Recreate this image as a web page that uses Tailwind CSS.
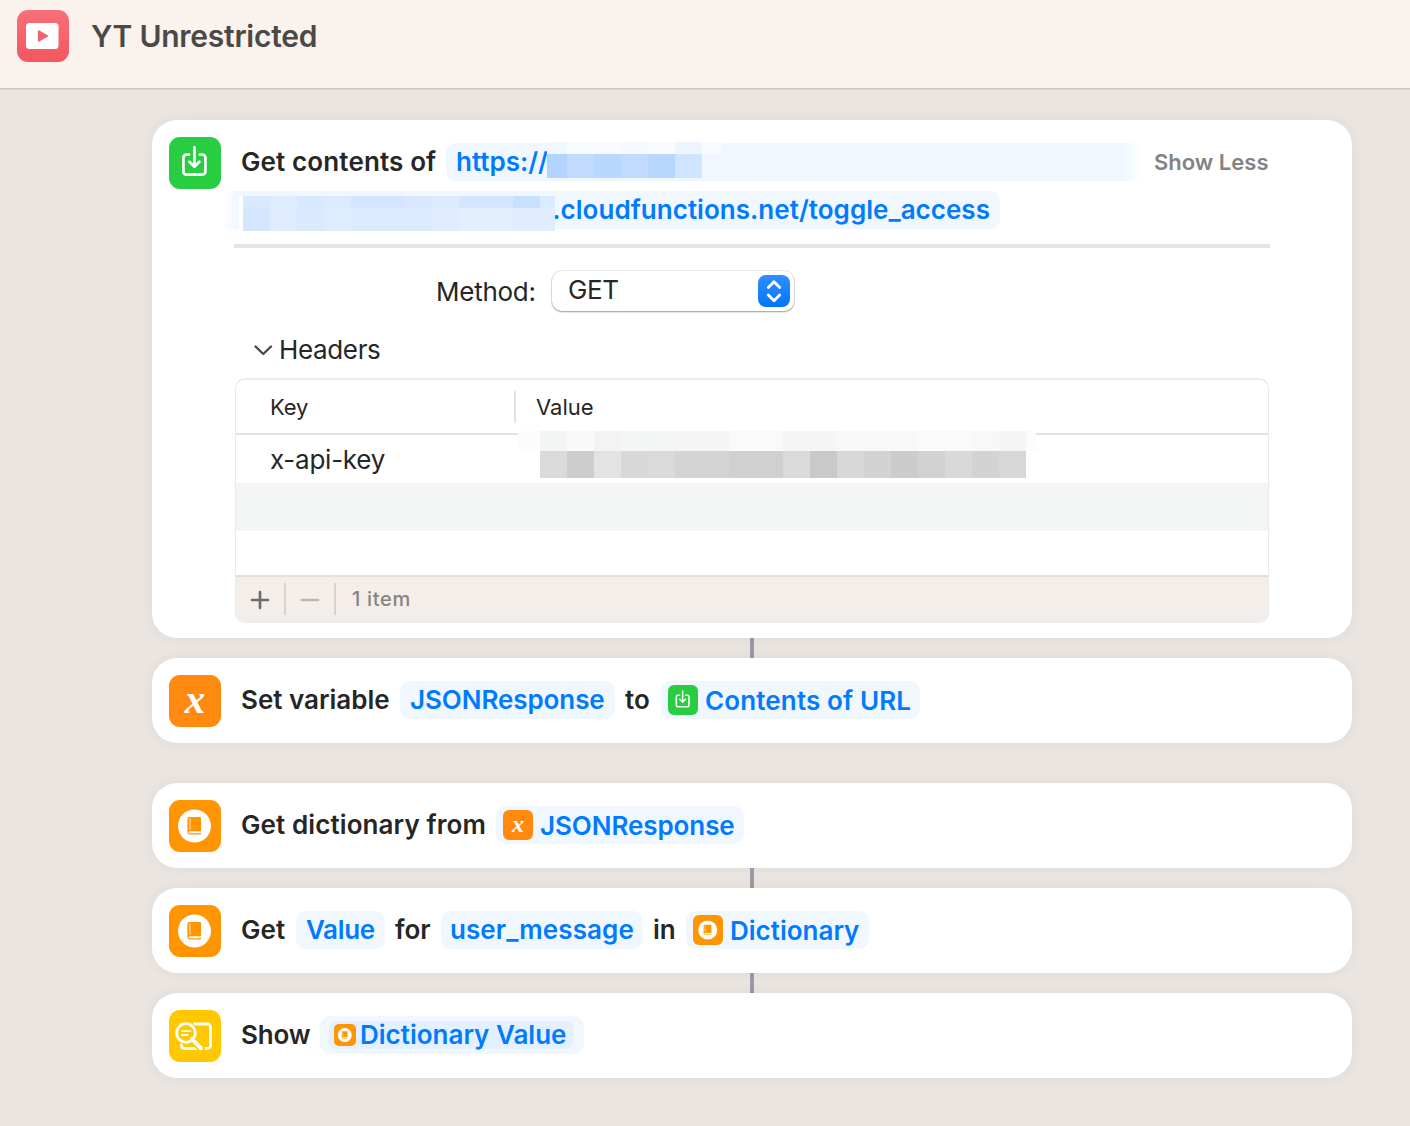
<!DOCTYPE html>
<html lang="en">
<head>
<meta charset="utf-8">
<title>YT Unrestricted</title>
<script src="https://cdn.jsdelivr.net/npm/@tailwindcss/browser@4"></script>
</head>
<body class="w-[1410px] h-[1126px] overflow-hidden bg-[#eae5e1] font-['Inter',sans-serif] text-[26px] leading-[38px] text-[#262626]">
<svg class="hidden">
  <symbol id="download" viewBox="0 0 52 52"><g fill="none" stroke="#fff" stroke-width="2.7" stroke-linecap="round" stroke-linejoin="round"><path d="M20 17.6h-2.600a3 3 0 0 0-3 3v14a3 3 0 0 0 3 3h16a3 3 0 0 0 3-3v-14a3 3 0 0 0-3-3h-2.600"/><path d="M25.400 10.300v19.400M20.400 24.800l5 5 5-5"/></g></symbol>
  <symbol id="book" viewBox="0 0 52 52"><circle cx="25.500" cy="26" r="16.500" fill="#fff"/><path d="M20.500 17h10.200a1.300 1.300 0 0 1 1.300 1.300v12.400l-.8.8v1.400l.8.2v.6a.7.7 0 0 1-.7.700H20.800a2.400 2.400 0 0 1-2.400-2.400V19a2 2 0 0 1 2.100-2z" fill="#ff9500"/><path d="M21 18.200v11.800" stroke="#ffd9a3" stroke-width="1.300"/><path d="M20.600 31.200h10.200v2H20.600a1 1 0 0 1 0-2z" fill="#fff"/></symbol>
  <symbol id="quicklook" viewBox="0 0 52 52"><g fill="none" stroke="#fff" stroke-width="2.800" stroke-linecap="round" stroke-linejoin="round"><path d="M25 14h13.500a3 3 0 0 1 3 3v18.500a3 3 0 0 1-3 3H37M12.400 34.500v1a3 3 0 0 0 3 3H27"/><path d="M24.500 30.200l6.500 7.500" stroke="#ffc800" stroke-width="7"/><path d="M23.400 29.400l8.400 8.800" stroke-width="4"/><circle cx="17" cy="23" r="11.800" fill="#ffc800" stroke="none"/><path d="M23 29l3 3.200" stroke-width="3.600"/><circle cx="17" cy="23" r="9.300"/><path d="M13 21.100h8.500M13 25h5.500" stroke-width="1.900"/></g></symbol>
</svg>

<header class="flex h-[89px] items-start gap-[22px] border-b border-[#c9c3bf] bg-[#faf2ed] pl-[17px] pt-[10px] shadow-[0_1px_0_#ddd7d3]">
  <div class="flex size-[52px] items-center justify-center rounded-[11px] bg-linear-to-b from-[#f96f78] to-[#f4565f]">
    <svg class="size-[52px]" viewBox="0 0 52 52"><rect x="9" y="13" width="32.500" height="26" rx="3.500" fill="#fff"/><path d="M21.500 20.800v10.400l9.200-5.200z" fill="#f5616b" stroke="#f5616b" stroke-width="1.200" stroke-linejoin="round"/></svg>
  </div>
  <h1 class="mt-[7px] whitespace-nowrap text-[30px] font-semibold tracking-[-0.25px] text-[#4b4947]">YT Unrestricted</h1>
</header>

<main class="ml-[152px] mt-[31px] flex w-[1200px] flex-col">
  <section class="relative h-[518px] rounded-[25px] bg-white px-[17px] pt-[17px] shadow-[0_0_14px_rgba(0,0,0,0.05)]">
    <div class="flex h-[54px]">
      <div class="size-[52px] shrink-0 rounded-[11px] bg-[#28cd41]"><svg class="size-[52px]"><use href="#download"/></svg></div>
      <div class="ml-[20px] mt-[6px] flex h-[38px] whitespace-nowrap font-semibold">
        <div class="w-[205px] tracking-[0.13px]">Get contents of</div>
        <div class="w-[696px] rounded-l-[10px] bg-linear-to-r from-[#f0f7ff] from-97% to-white pl-[10px] text-[#007aff]">https://</div>
        <div class="ml-[12px] text-[22px] text-[#838383]">Show Less</div>
      </div>
    </div>
    <div class="ml-[53px] flex h-[38px] w-[778px] justify-end rounded-r-[10px] bg-linear-to-r from-white to-[#f0f7ff] to-2% pr-[10px] font-semibold tracking-[0.03px] text-[#007aff]">.cloudfunctions.net/toggle_access</div>

    <!-- redacted parts of the address -->
    <div class="absolute left-[395px] top-[22px] flex h-3">
      <i class="w-5 bg-[#f0f7ff]"></i><i class="w-[54px] bg-[#f9fcff]"></i><i class="w-[27px] bg-[#f5faff]"></i><i class="w-[27px] bg-[#f9fcff]"></i><i class="w-[27px] bg-[#edf5ff]"></i><i class="w-5 bg-[#f9fcff]"></i>
    </div>
    <div class="absolute left-[395px] top-[34px] flex h-6">
      <i class="w-5 bg-[#b3d4ff]"></i><i class="w-[27px] bg-[#c2dbff]"></i><i class="w-[27px] bg-[#b9d8ff]"></i><i class="w-[27px] bg-[#c0dbff]"></i><i class="w-[27px] bg-[#b7d7ff]"></i><i class="w-[27px] bg-[#cfe4ff]"></i>
    </div>
    <div class="absolute left-[87px] top-[76px] h-[35px] w-1 bg-white"></div>
    <div class="absolute left-[91px] top-[76px] flex h-3">
      <i class="w-[27px] bg-[#d9e9ff]"></i><i class="w-[27px] bg-[#dfebff]"></i><i class="w-[27px] bg-[#d8e8ff]"></i><i class="w-[27px] bg-[#dceaff]"></i><i class="w-[54px] bg-[#d4e6ff]"></i><i class="w-[27px] bg-[#d9e8ff]"></i><i class="w-[27px] bg-[#dceaff]"></i><i class="w-[54px] bg-[#d5e7ff]"></i><i class="w-[27px] bg-[#c9dfff]"></i><i class="w-[15px] bg-[#dceaff]"></i>
    </div>
    <div class="absolute left-[91px] top-[88px] flex h-[23px]">
      <i class="w-[27px] bg-[#d3e6ff]"></i><i class="w-[27px] bg-[#dfebff]"></i><i class="w-[27px] bg-[#d9eaff]"></i><i class="w-[27px] bg-[#deecff]"></i><i class="w-[81px] bg-[#daeaff]"></i><i class="w-[27px] bg-[#dfebff]"></i><i class="w-[54px] bg-[#e2efff]"></i><i class="w-[42px] bg-[#e0edff]"></i>
    </div>

    <div class="ml-[65px] mt-[15px] h-1 w-[1036px] bg-[#e5e5e5]"></div>

    <div class="ml-[267px] mt-[23px] flex h-[40px] items-center">
      <div class="w-[116px] whitespace-nowrap pt-[2px] tracking-[-0.25px]">Method:</div>
      <div class="flex h-[40px] w-[242px] items-center justify-between rounded-[10px] bg-white pl-4 pr-1 shadow-[0_0_0_1px_rgba(0,0,0,0.07),0_1px_2px_rgba(0,0,0,0.35)]">
        <span class="-mt-[2px] tracking-[-0.4px]">GET</span>
        <div class="size-8 rounded-[8px] bg-linear-to-b from-[#2c90ff] to-[#0074fb]"><svg class="size-8" viewBox="0 0 32 32" fill="none" stroke="#fff" stroke-width="2.800" stroke-linecap="round" stroke-linejoin="round"><path d="M10.300 12.500l5.700-5.700 5.700 5.700M10.300 20l5.700 5.700 5.700-5.700"/></svg></div>
      </div>
    </div>

    <div class="ml-[84px] mt-5 flex h-[38px] items-center gap-[6px]">
      <svg class="h-5 w-5" viewBox="0 0 20 20" fill="none" stroke="#4a4a4a" stroke-width="2.400" stroke-linecap="round" stroke-linejoin="round"><path d="M2.500 6.500l7.800 7.500 7.700-7.500"/></svg>
      <span class="tracking-[-0.35px]">Headers</span>
    </div>

    <div class="ml-[66px] mt-[9px] flex h-[245px] w-[1034px] flex-col overflow-hidden rounded-[10px] border border-t-2 border-[#ebebeb]">
      <div class="flex h-[55px] shrink-0 items-center border-b-2 border-[#e2e2e2] text-[22px]">
        <div class="w-[278px] pl-[34px] tracking-[-0.2px]">Key</div>
        <div class="h-8 w-[2px] bg-[#e2e2e2]"></div>
        <div class="pl-5">Value</div>
      </div>
      <div class="h-12 shrink-0 pl-[34px] pt-[6px] tracking-[-0.25px]">x-api-key</div>
      <div class="h-12 shrink-0 bg-[#f4f5f5]"></div>
      <div class="h-[44px] shrink-0"></div>
      <div class="flex flex-1 items-center border-t-2 border-[#e3dfdb] bg-[#f3eeea] pb-[2px] text-[20px] font-medium text-[#868482]">
        <div class="flex w-[48px] items-center justify-center pt-[2px]"><svg class="h-5 w-5" viewBox="0 0 20 20" stroke="#6f6c6a" stroke-width="2.600" stroke-linecap="round"><path d="M2 10h16M10 2v16"/></svg></div>
        <div class="h-8 w-[2px] bg-[#d8d3cf]"></div>
        <div class="flex w-[48px] items-center justify-center pt-[2px]"><svg class="h-5 w-5" viewBox="0 0 20 20" stroke="#bab6b3" stroke-width="2.600" stroke-linecap="round"><path d="M2 10h16"/></svg></div>
        <div class="h-8 w-[2px] bg-[#d8d3cf]"></div>
        <div class="ml-4 tracking-[0.7px]">1 item</div>
      </div>
    </div>

    <!-- redacted key value -->
    <div class="absolute left-[366px] top-[311px] flex h-5">
      <i class="w-[22px] bg-[#fcfcfc]"></i><i class="w-[27px] bg-[#f3f5f4]"></i><i class="w-[27px] bg-[#f9f9f9]"></i><i class="w-[27px] bg-[#f3f3f3]"></i><i class="w-[54px] bg-[#f4f6f5]"></i><i class="w-[54px] bg-[#f5f5f5]"></i><i class="w-[54px] bg-[#fafafa]"></i><i class="w-[54px] bg-[#f5f5f5]"></i><i class="w-[81px] bg-[#f8f8f8]"></i><i class="w-[54px] bg-[#fafafa]"></i><i class="w-[27px] bg-[#f8f8f8]"></i><i class="w-[27px] bg-[#f5f5f5]"></i><i class="w-[10px] bg-[#fcfcfc]"></i>
    </div>
    <div class="absolute left-[388px] top-[331px] flex h-[27px]">
      <i class="w-[27px] bg-[#dadada]"></i><i class="w-[27px] bg-[#cdcdcd]"></i><i class="w-[27px] bg-[#e3e3e3]"></i><i class="w-[27px] bg-[#d8d8d8]"></i><i class="w-[27px] bg-[#dadada]"></i><i class="w-[54px] bg-[#d4d4d4]"></i><i class="w-[54px] bg-[#d0d0d0]"></i><i class="w-[27px] bg-[#dadada]"></i><i class="w-[27px] bg-[#c9c9c9]"></i><i class="w-[27px] bg-[#d7d7d7]"></i><i class="w-[27px] bg-[#d3d3d3]"></i><i class="w-[27px] bg-[#cccccc]"></i><i class="w-[27px] bg-[#d2d2d2]"></i><i class="w-[27px] bg-[#d9d9d9]"></i><i class="w-[27px] bg-[#d3d3d3]"></i><i class="w-[27px] bg-[#d7d7d7]"></i>
    </div>
  </section>

  <div class="mx-auto h-5 w-1 bg-[#989ba3]"></div>

  <section class="flex h-[85px] whitespace-nowrap rounded-[25px] bg-white pl-[17px] pt-[17px] font-semibold shadow-[0_0_14px_rgba(0,0,0,0.05)]">
    <div class="flex size-[52px] items-center justify-center rounded-[11px] bg-[#ff8a0f] font-['Liberation_Serif',serif] text-[41px] font-bold italic leading-[36px] text-white"><span class="-mt-[5px]">x</span></div>
    <div class="ml-[20px] mt-[6px] w-[159px]">Set variable</div>
    <div class="mt-[6px] h-[38px] w-[215px] rounded-[10px] bg-[#f0f7ff] pl-[10px] tracking-[-0.08px] text-[#007aff]">JSONResponse</div>
    <div class="ml-[10px] mt-[6px] w-[36px]">to</div>
    <div class="mt-[6px] flex h-[38px] w-[259px] items-center rounded-[10px] bg-[#f0f7ff] pl-[7px] text-[#007aff]">
      <div class="mr-[7px] size-[30px] rounded-[6px] bg-[#28cd41]"><svg class="size-[30px]"><use href="#download"/></svg></div><span class="pt-[2px] tracking-[0.13px]">Contents of URL</span>
    </div>
  </section>

  <section class="mt-10 flex h-[85px] whitespace-nowrap rounded-[25px] bg-white pl-[17px] pt-[17px] font-semibold shadow-[0_0_14px_rgba(0,0,0,0.05)]">
    <div class="size-[52px] rounded-[11px] bg-[#ff9500]"><svg class="size-[52px]"><use href="#book"/></svg></div>
    <div class="ml-[20px] mt-[6px] w-[255px] tracking-[0.1px]">Get dictionary from</div>
    <div class="mt-[6px] flex h-[38px] w-[248px] items-center rounded-[10px] bg-[#f0f7ff] pl-[7px] text-[#007aff]">
      <div class="mr-[7px] flex size-[30px] items-center justify-center rounded-[6px] bg-[#ff8a0f] font-['Liberation_Serif',serif] text-[24px] font-bold italic leading-[20px] text-white"><span class="-mt-[3px]">x</span></div><span class="pt-[2px] tracking-[-0.08px]">JSONResponse</span>
    </div>
  </section>

  <div class="mx-auto h-5 w-1 bg-[#989ba3]"></div>

  <section class="flex h-[85px] whitespace-nowrap rounded-[25px] bg-white pl-[17px] pt-[17px] font-semibold shadow-[0_0_14px_rgba(0,0,0,0.05)]">
    <div class="size-[52px] rounded-[11px] bg-[#ff9500]"><svg class="size-[52px]"><use href="#book"/></svg></div>
    <div class="ml-[20px] mt-[6px] w-[55px] tracking-[0.1px]">Get</div>
    <div class="mt-[6px] h-[38px] w-[89px] rounded-[10px] bg-[#f0f7ff] pl-[10px] tracking-[-0.35px] text-[#007aff]">Value</div>
    <div class="ml-[10px] mt-[6px] w-[46px]">for</div>
    <div class="mt-[6px] h-[38px] w-[202px] rounded-[10px] bg-[#f0f7ff] pl-[9px] tracking-[0.08px] text-[#007aff]">user_message</div>
    <div class="ml-[10px] mt-[6px] w-[33px]">in</div>
    <div class="mt-[6px] flex h-[38px] w-[183px] items-center rounded-[10px] bg-[#f0f7ff] pl-[7px] text-[#007aff]">
      <div class="mr-[7px] size-[30px] rounded-[6px] bg-[#ff9500]"><svg class="size-[30px]"><use href="#book"/></svg></div><span class="pt-[2px]">Dictionary</span>
    </div>
  </section>

  <div class="mx-auto h-5 w-1 bg-[#989ba3]"></div>

  <section class="flex h-[85px] whitespace-nowrap rounded-[25px] bg-white pl-[17px] pt-[17px] font-semibold shadow-[0_0_14px_rgba(0,0,0,0.05)]">
    <div class="size-[52px] rounded-[11px] bg-[#ffc800]"><svg class="size-[52px]"><use href="#quicklook"/></svg></div>
    <div class="ml-[20px] mt-[6px] w-[79px] tracking-[-0.2px]">Show</div>
    <div class="mt-[6px] flex h-[38px] w-[264px] items-center rounded-[10px] bg-[#f0f7ff] pl-[9px] text-[#007aff]">
      <div class="flex h-7 w-[244px] items-center rounded-[7px] bg-[#e3f0ff] pl-[5px]"><div class="mr-[4px] size-[22px] rounded-[5px] bg-[#ff9500]"><svg class="size-[22px]"><use href="#book"/></svg></div><span>Dictionary Value</span></div>
    </div>
  </section>
</main>
</body>
</html>
